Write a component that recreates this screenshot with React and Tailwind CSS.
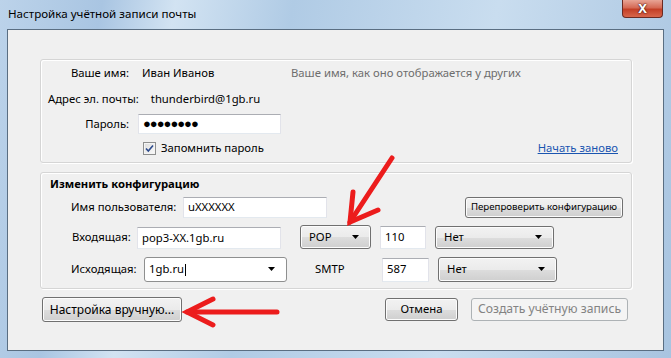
import React from "react";

const btn =
  "flex items-center justify-center rounded-[3px] border border-[#707070] bg-[linear-gradient(#f2f2f2_0%,#ebebeb_50%,#dddddd_51%,#cfcfcf_100%)] shadow-[inset_0_0_0_1px_#fcfcfc] text-black";
const input =
  "flex items-center bg-white border border-[#abadb3] border-l-[#e2e3ea] border-r-[#e2e3ea] border-b-[#e3e9ef] px-[4px]";

function Arrow() {
  return (
    <svg width="8" height="5" viewBox="0 0 8 5" className="shrink-0">
      <path d="M0 0h7L3.5 4z" fill="#000" />
    </svg>
  );
}

function Select({ label, className, arrowPad = "pr-[10px]" }) {
  return (
    <div className={`${btn} !justify-between pl-[8px] ${arrowPad} ${className}`}>
      <span>{label}</span>
      <Arrow />
    </div>
  );
}

export default function App() {
  return (
    <div
      className="relative w-[671px] h-[358px] overflow-hidden whitespace-nowrap flex flex-col bg-[linear-gradient(100deg,#bcd3ea_0%,#a9c5e2_14%,#d2e3f2_24%,#b0cbe5_40%,#c9ddef_68%,#a8c4e0_100%)] text-[11.3px] text-black"
      style={{ fontFamily: '"Noto Sans", "Open Sans", sans-serif' }}
    >
      {/* title bar */}
      <div className="h-[29px] flex items-start shrink-0">
        <div className="pl-[8px] pt-[6px] text-[11.6px] leading-[16px] text-black">
          Настройка учётной записи почты
        </div>
        <div className="ml-auto mr-[8px] w-[41px] h-[18px] rounded-b-[4px] border border-t-0 border-[#6b2a22] bg-[linear-gradient(#e8a495_0%,#d56a55_45%,#c33f26_55%,#d8664b_100%)] flex items-center justify-center">
          <span
            className="text-white font-bold text-[13px] leading-none"
            style={{ textShadow: "0 0 1px #3a1010, 0 0 2px #3a1010" }}
          >
            X
          </span>
        </div>
      </div>

      {/* client area */}
      <div className="mx-[7px] h-[322px] border border-[#5a6e82] bg-[#f0f0f0] flex flex-col">
        {/* group 1 */}
        <div className="ml-[32px] mt-[29px] w-[592px] h-[104px] rounded-[3px] border border-[#d5d5d5] shadow-[inset_1px_1px_0_#ffffff,1px_1px_0_#ffffff] flex flex-col">
          <div className="flex items-center h-[16px] mt-[5px]">
            <div className="w-[88px] text-right">Ваше имя:</div>
            <div className="ml-[13px] w-[149px]">Иван Иванов</div>
            <div className="text-[#6d6d6d]">Ваше имя, как оно отображается у других</div>
          </div>
          <div className="flex items-center h-[16px] mt-[10px]">
            <div className="pl-[7px]">Адрес эл. почты:</div>
            <div className="ml-[12px]">thunderbird@1gb.ru</div>
          </div>
          <div className="flex items-center mt-[7px]">
            <div className="w-[88px] text-right">Пароль:</div>
            <div className={`${input} ml-[9px] w-[143px] h-[20px] text-[13px] tracking-[-1px] font-bold`}>
              ●●●●●●●●
            </div>
          </div>
          <div className="flex items-center mt-[6px] h-[16px]">
            <div className="ml-[102px] w-[13px] h-[13px] border border-[#8e8f8f] bg-[linear-gradient(135deg,#dcdcdc,#fbfbfb)] shadow-[inset_0_0_0_1px_#f4f4f4] flex items-center justify-center">
              <svg width="9" height="9" viewBox="0 0 9 9">
                <path d="M1 4.5l2.3 2.5L8 1.5" stroke="#2c4a8c" strokeWidth="1.6" fill="none" />
              </svg>
            </div>
            <div className="ml-[5px]">Запомнить пароль</div>
            <div className="ml-auto mr-[13px] text-[#1a55b0] underline">Начать заново</div>
          </div>
        </div>

        {/* group 2 */}
        <div className="ml-[32px] mt-[9px] w-[592px] h-[117px] rounded-[3px] border border-[#d5d5d5] shadow-[inset_1px_1px_0_#ffffff,1px_1px_0_#ffffff] flex flex-col">
          <div className="ml-[9px] mt-[3px] h-[16px] font-bold leading-[16px]">Изменить конфигурацию</div>
          <div className="flex items-center mt-[5px]">
            <div className="ml-[30px] w-[105px] shrink-0">Имя пользователя:</div>
            <div className={`${input} ml-[7px] w-[144px] h-[21px] shrink-0`}>uXXXXXX</div>
            <div className={`${btn} ml-[138px] w-[158px] h-[21px] text-[9.7px] shrink-0`}>
              Перепроверить конфигурацию
            </div>
          </div>
          <div className="flex items-center mt-[7px]">
            <div className="ml-[31px] w-[65px]">Входящая:</div>
            <div className={`${input} w-[144px] h-[22px] mt-[2px]`}>pop3-XX.1gb.ru</div>
            <Select label="POP" className="ml-[19px] w-[71px] h-[24px]" />
            <div className={`${input} ml-[9px] w-[46px] h-[23px]`}>110</div>
            <Select label="Нет" className="ml-[9px] w-[119px] h-[23px]" />
          </div>
          <div className="flex items-center mt-[8px]">
            <div className="ml-[30px] w-[73px]">Исходящая:</div>
            <div className="w-[143px] h-[25px] rounded-[3px] border border-[#8e8f8f] bg-white flex items-center justify-between pl-[4px] pr-[10px]">
              <span>
                1gb.ru<span className="inline-block w-px h-[12px] bg-black align-middle ml-px" />
              </span>
              <Arrow />
            </div>
            <div className="ml-[28px] w-[67px]">SMTP</div>
            <div className={`${input} w-[47px] h-[24px]`}>587</div>
            <Select label="Нет" className="ml-[9px] w-[119px] h-[25px]" />
          </div>
        </div>

        {/* bottom buttons */}
        <div className="flex items-center mt-[8px]">
          <div className={`${btn} ml-[34px] w-[140px] h-[25px] text-[12px]`}>Настройка вручную...</div>
          <div className={`${btn} ml-[203px] w-[73px] h-[23px]`}>Отмена</div>
          <div className="ml-[13px] w-[157px] h-[23px] rounded-[3px] border border-[#adb2b5] bg-[#f4f4f4] text-[#838383] text-[12.2px] flex items-center justify-center">
            Создать учётную запись
          </div>
        </div>
      </div>

      {/* red annotation arrows */}
      <svg
        className="absolute left-0 top-0 pointer-events-none"
        width="671"
        height="358"
        viewBox="0 0 671 358"
      >
        <g stroke="#ec1c1c" strokeWidth="5" strokeLinecap="round" fill="none">
          <path d="M392 158L350 222" />
          <path d="M353 192L350 222L378 210" strokeLinejoin="miter" />
          <path d="M277 312L187 312" />
          <path d="M213 299L187 312L213 325" />
        </g>
      </svg>
    </div>
  );
}
